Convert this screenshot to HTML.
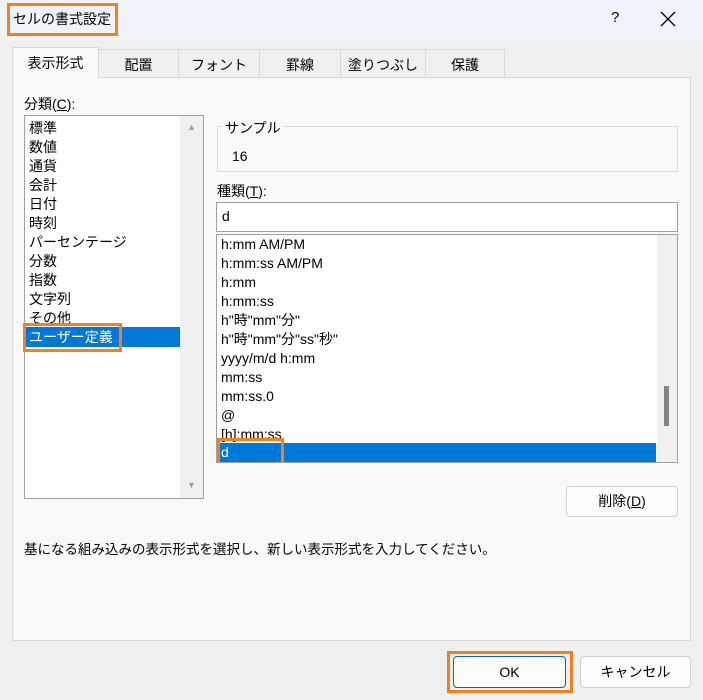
<html><head><style>
body{margin:0;width:703px;height:700px;background:#f0f0f0;font-family:"Liberation Sans","Noto Sans CJK JP",sans-serif;font-size:14px;color:#000;position:relative;overflow:hidden}
.a{position:absolute}
.tab{position:absolute;top:49px;height:28px;border:1px solid #d9d9d9;border-bottom:none;background:#f0f0f0;text-align:center;line-height:30px;box-sizing:border-box}
.it{position:absolute;left:4px;height:19px;line-height:19px;white-space:nowrap}
.bt{position:absolute;background:#fdfdfd;border:1px solid #d0d0d0;border-radius:4px;text-align:center;box-sizing:border-box}
</style></head><body>
<div class="a" style="left:0;top:0;width:703px;height:40px;background:#eef4f9"></div>
<div class="a" style="left:7px;top:3px;width:111px;height:33px;border:3px solid #f47f1f;box-sizing:border-box;line-height:27px;padding-left:3px;font-size:14px">セルの書式設定</div>
<div class="a" style="left:611px;top:9px;font-size:15px">?</div>
<svg class="a" style="left:660px;top:11px" width="16" height="16"><path d="M1 1L15 15M15 1L1 15" stroke="#000" stroke-width="1.3"/></svg>
<div class="a" style="left:12px;top:77px;width:679px;height:564px;background:#f9f9f9;border:1px solid #d9d9d9;box-sizing:border-box"></div>
<div class="tab" style="left:12px;width:87px;top:47px;height:31px;background:#f9f9f9">表示形式</div>
<div class="tab" style="left:98px;width:81px">配置</div>
<div class="tab" style="left:178px;width:82px">フォント</div>
<div class="tab" style="left:259px;width:82px">罫線</div>
<div class="tab" style="left:340px;width:86px">塗りつぶし</div>
<div class="tab" style="left:425px;width:80px">保護</div>
<div class="a" style="left:24px;top:94px">分類(<u>C</u>):</div>
<div class="a" style="left:24px;top:115px;width:180px;height:384px;background:#fff;border:1px solid #a0a0a0;box-sizing:border-box">
<div class="it" style="top:3px">標準</div><div class="it" style="top:22px">数値</div><div class="it" style="top:41px">通貨</div><div class="it" style="top:60px">会計</div><div class="it" style="top:79px">日付</div><div class="it" style="top:98px">時刻</div><div class="it" style="top:117px">パーセンテージ</div><div class="it" style="top:136px">分数</div><div class="it" style="top:155px">指数</div><div class="it" style="top:174px">文字列</div><div class="it" style="top:193px">その他</div>
<div class="a" style="left:1px;top:211px;width:154px;height:20px;background:#0078d7"></div>
<div class="it" style="top:212px;color:#fff">ユーザー定義</div>
<div class="a" style="left:-2px;top:207px;width:99px;height:29px;border:3px solid #f47f1f;box-sizing:border-box"></div>
<div class="a" style="left:155px;top:0;width:23px;height:382px;background:#f0f0f0"></div>
<div class="a" style="left:162px;top:6px;font-size:9px;color:#a0a0a0">▲</div>
<div class="a" style="left:162px;top:364px;font-size:9px;color:#a0a0a0">▼</div>
</div>
<div class="a" style="left:217px;top:126px;width:461px;height:46px;border:1px solid #dcdcdc;box-sizing:border-box"></div>
<div class="a" style="left:222px;top:118px;background:#f9f9f9;padding:0 3px">サンプル</div>
<div class="a" style="left:232px;top:148px">16</div>
<div class="a" style="left:217px;top:181px">種類(<u>T</u>):</div>
<div class="a" style="left:216px;top:202px;width:462px;height:30px;background:#fff;border:1px solid #a0a0a0;box-sizing:border-box;padding:5px 0 0 5px">d</div>
<div class="a" style="left:216px;top:234px;width:462px;height:229px;background:#fff;border:1px solid #a0a0a0;box-sizing:border-box;overflow:hidden">
<div class="it" style="top:0">h:mm AM/PM</div><div class="it" style="top:19px">h:mm:ss AM/PM</div><div class="it" style="top:38px">h:mm</div><div class="it" style="top:57px">h:mm:ss</div><div class="it" style="top:76px">h"時"mm"分"</div><div class="it" style="top:95px">h"時"mm"分"ss"秒"</div><div class="it" style="top:114px">yyyy/m/d h:mm</div><div class="it" style="top:133px">mm:ss</div><div class="it" style="top:152px">mm:ss.0</div><div class="it" style="top:171px">@</div><div class="it" style="top:190px">[h]:mm:ss</div>
<div class="a" style="left:1px;top:208px;width:438px;height:19px;background:#0078d7"></div>
<div class="it" style="top:208px;color:#fff">d</div>
<div class="a" style="left:0px;top:203px;width:67px;height:27px;border:3px solid #f47f1f;box-sizing:border-box"></div>
<div class="a" style="left:440px;top:0;width:20px;height:227px;background:#f0f0f0"></div>
<div class="a" style="left:447px;top:151px;width:5px;height:40px;background:#858585"></div>
</div>
<div class="bt" style="left:566px;top:486px;width:112px;height:31px;line-height:29px">削除(<u>D</u>)</div>
<div class="a" style="left:24px;top:538px;font-size:13.5px">基になる組み込みの表示形式を選択し、新しい表示形式を入力してください。</div>
<div class="a" style="left:447px;top:651px;width:126px;height:42px;border:3px solid #f47f1f;box-sizing:border-box"></div>
<div class="bt" style="left:453px;top:656px;width:113px;height:32px;line-height:30px;border-color:#0067c0">OK</div>
<div class="bt" style="left:580px;top:656px;width:111px;height:32px;line-height:30px">キャンセル</div>
</body></html>
